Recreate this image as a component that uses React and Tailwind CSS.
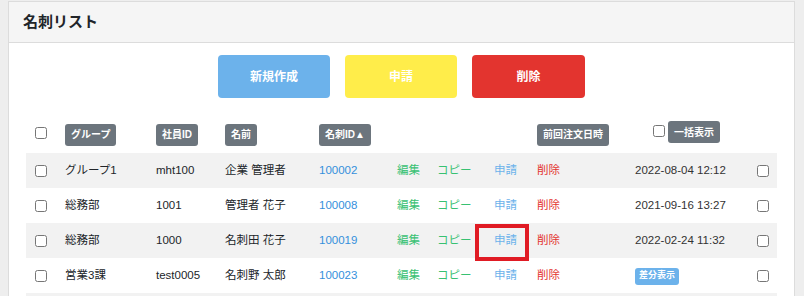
import React from "react";

const rows = [
  { group: "グループ1", emp: "mht100", name: "企業 管理者", id: "100002", date: "2022-08-04 12:12" },
  { group: "総務部", emp: "1001", name: "管理者 花子", id: "100008", date: "2021-09-16 13:27" },
  { group: "総務部", emp: "1000", name: "名刺田 花子", id: "100019", date: "2022-02-24 11:32", marked: true },
  { group: "営業3課", emp: "test0005", name: "名刺野 太郎", id: "100023", diff: true },
];

// 列幅（左から）
const cols = "grid grid-cols-[39px_91px_69px_94px_78px_40px_57px_43px_98px_122px_19px]";

function Badge({ children }) {
  return (
    <span className="inline-flex h-[22px] items-center rounded-[3px] bg-[#6c757d] px-[6px] text-[10px] font-bold text-white">
      {children}
    </span>
  );
}

function Check() {
  return <input type="checkbox" className="m-0 block h-[12px] w-[12px]" />;
}

export default function App() {
  return (
    <div
      className="min-h-[296px] bg-[#eeeeee] pl-[8px] pr-[9px] pt-[1px]"
      style={{ fontFamily: '"Liberation Sans", "Noto Sans CJK JP", sans-serif' }}
    >
      <div className="h-[320px] border border-[#dcdcdc] bg-white">
        {/* ヘッダー */}
        <div className="flex h-[41px] items-center border-b border-[#dcdcdc] bg-[#f5f5f5] pl-[14px]">
          <h1 className="text-[15px] font-bold text-[#212529]">名刺リスト</h1>
        </div>

        <div className="px-[17px] pt-[12px]">
          {/* 操作ボタン */}
          <div className="flex justify-center gap-[15px]">
            <button className="h-[43px] w-[112px] rounded-[4px] bg-[#6cb2eb] text-[12px] font-bold text-white">新規作成</button>
            <button className="h-[43px] w-[112px] rounded-[4px] bg-[#ffed4a] text-[12px] font-bold text-white">申請</button>
            <button className="h-[43px] w-[113px] rounded-[4px] bg-[#e3342f] text-[12px] font-bold text-white">削除</button>
          </div>

          {/* テーブル見出し */}
          <div className={`${cols} mt-[23px] h-[32px] items-start`}>
            <div className="flex pl-[9px] pt-[6px]"><Check /></div>
            <div><Badge>グループ</Badge></div>
            <div><Badge>社員ID</Badge></div>
            <div><Badge>名前</Badge></div>
            <div><Badge>名刺ID▲</Badge></div>
            <div />
            <div />
            <div />
            <div><Badge>前回注文日時</Badge></div>
            <div className="flex items-start gap-[3px] pl-[18px]">
              <span className="pt-[4px]"><Check /></span>
              <Badge>一括表示</Badge>
            </div>
            <div />
          </div>

          {/* テーブル本体 */}
          {rows.map((r, i) => (
            <div
              key={i}
              className={`${cols} h-[35px] items-center text-[11.5px] text-[#212529] ${i % 2 === 0 ? "bg-[#f2f2f2]" : "bg-white"}`}
            >
              <div className="flex pl-[9px]"><Check /></div>
              <div>{r.group}</div>
              <div>{r.emp}</div>
              <div>{r.name}</div>
              <div className="text-[#3490dc]">{r.id}</div>
              <div className="text-[#38c172]">編集</div>
              <div className="text-[#38c172]">コピー</div>
              <div className="relative h-full">
                <span className="flex h-full items-center text-[#6cb2eb]">申請</span>
                {r.marked && (
                  <span className="absolute left-[-19px] top-[1px] h-[37px] w-[54px] border-[4px] border-[#e01b24]" />
                )}
              </div>
              <div className="text-[#e3342f]">削除</div>
              <div>
                {r.diff ? (
                  <span className="inline-flex h-[17px] items-center rounded-[3px] bg-[#6cb2eb] px-[4px] text-[9px] font-bold text-white">差分表示</span>
                ) : (
                  <span className="text-[#333]">{r.date}</span>
                )}
              </div>
              <div className="flex"><Check /></div>
            </div>
          ))}
          {/* 次の行（画面外） */}
          <div className="h-[35px] bg-[#f2f2f2]" />
        </div>
      </div>
    </div>
  );
}
